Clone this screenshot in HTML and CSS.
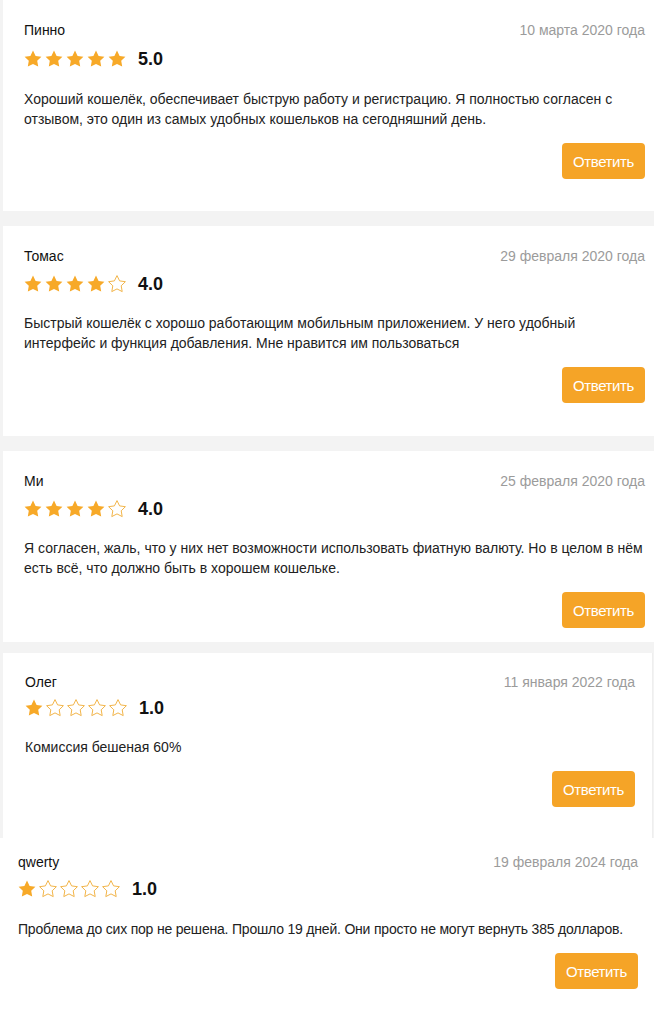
FILE: index.html
```html
<!DOCTYPE html>
<html>
<head>
    <meta charset="utf-8">
    <title>Отзывы</title>
    <link rel="stylesheet" href="styles.css">
</head>
<body>
    <svg width="0" height="0" class="defs">
        <defs>
            <path id="star" d="M9 0.6l2.6 5.3 5.8 0.8-4.2 4.1 1 5.8L9 13.9l-5.2 2.7 1-5.8L0.6 6.7l5.8-0.8z"/>
        </defs>
    </svg>

    <div class="review review-1">
        <div class="review-head">
            <span class="name">Пинно</span>
            <span class="date">10 марта 2020 года</span>
        </div>
        <div class="rating">
            <div class="stars" data-value="5"></div>
            <span class="score">5.0</span>
        </div>
        <p class="text">Хороший кошелёк, обеспечивает быструю работу и регистрацию. Я полностью согласен с отзывом, это один из самых удобных кошельков на сегодняшний день.</p>
        <div class="actions"><button>Ответить</button></div>
    </div>

    <div class="review review-2">
        <div class="review-head">
            <span class="name">Томас</span>
            <span class="date">29 февраля 2020 года</span>
        </div>
        <div class="rating">
            <div class="stars" data-value="4"></div>
            <span class="score">4.0</span>
        </div>
        <p class="text">Быстрый кошелёк с хорошо работающим мобильным приложением. У него удобный интерфейс и функция добавления. Мне нравится им пользоваться</p>
        <div class="actions"><button>Ответить</button></div>
    </div>

    <div class="review review-3">
        <div class="review-head">
            <span class="name">Ми</span>
            <span class="date">25 февраля 2020 года</span>
        </div>
        <div class="rating">
            <div class="stars" data-value="4"></div>
            <span class="score">4.0</span>
        </div>
        <p class="text">Я согласен, жаль, что у них нет возможности использовать фиатную валюту. Но в целом в нём есть всё, что должно быть в хорошем кошельке.</p>
        <div class="actions"><button>Ответить</button></div>
    </div>

    <div class="review review-4">
        <div class="review-head">
            <span class="name">Олег</span>
            <span class="date">11 января 2022 года</span>
        </div>
        <div class="rating">
            <div class="stars" data-value="1"></div>
            <span class="score">1.0</span>
        </div>
        <p class="text">Комиссия бешеная 60%</p>
        <div class="actions"><button>Ответить</button></div>
    </div>

    <div class="review review-5">
        <div class="review-head">
            <span class="name">qwerty</span>
            <span class="date">19 февраля 2024 года</span>
        </div>
        <div class="rating">
            <div class="stars" data-value="1"></div>
            <span class="score">1.0</span>
        </div>
        <p class="text">Проблема до сих пор не решена. Прошло 19 дней. Они просто не могут вернуть 385 долларов.</p>
        <div class="actions"><button>Ответить</button></div>
    </div>

<script>
// fill the star rows from data-value
document.querySelectorAll(".stars").forEach(row => {
    const value = Number(row.getAttribute("data-value"));
    let html = "";
    for (let i = 1; i <= 5; i++) {
        const cls = i <= value ? "star full" : "star empty";
        html += '<svg class="' + cls + '" viewBox="0 0 18 18"><use href="#star"/></svg>';
    }
    row.innerHTML = html;
});
</script>
</body>
</html>
```

FILE: styles.css
```css
body {
    margin: 0;
    background: #f3f3f3;
    font-family: "Liberation Sans", Arial, sans-serif;
    color: #1a1a1a;
}
.defs {
    position: absolute;
}
.review {
    background: #fff;
    margin-left: 3px;
    padding: 20px 9px 32px 21px;
}
.review-2 {
    margin-top: 15px;
    padding-bottom: 33px;
}
.review-3 {
    margin-top: 15px;
    padding-bottom: 14px;
}
.review-2 .rating,
.review-3 .rating {
    margin-top: 6px;
}
.review-2 .text,
.review-3 .text {
    margin-top: 17px;
}
.review-4 {
    margin-top: 11px;
    padding: 19px 17px 31px 22px;
    margin-right: 1px;
    border-right: 1px solid #eee;
}
.review-4 .rating {
    margin-top: 4px;
}
.review-4 .text {
    margin-top: 17px;
}
.review-5 {
    margin-left: 0;
    padding: 14px 16px 22px 18px;
}
.review-5 .rating {
    margin-top: 5px;
}
.review-5 .text {
    letter-spacing: -0.2px;
    white-space: nowrap;
}
.review-head {
    display: flex;
    justify-content: space-between;
    align-items: center;
    height: 20px;
    font-size: 14px;
}
.name {
    color: #111;
}
.date {
    color: #9b9b9b;
}
.rating {
    display: flex;
    align-items: center;
    height: 24px;
    margin-top: 7px;
}
.stars {
    display: flex;
    gap: 3px;
}
.star {
    width: 18px;
    height: 18px;
}
.star.full {
    fill: #f7a928;
}
.star.empty {
    fill: none;
    stroke: #f2b54a;
    stroke-width: 1;
}
.score {
    margin-left: 12px;
    font-size: 18px;
    font-weight: bold;
    color: #111;
}
.text {
    margin: 18px 0 0;
    font-size: 14px;
    line-height: 20px;
    color: #222;
}
.actions {
    display: flex;
    justify-content: flex-end;
    margin-top: 14px;
}
button {
    width: 83px;
    height: 36px;
    background: #f5a427;
    color: #fff;
    border: none;
    border-radius: 4px;
    font-family: "Liberation Sans", Arial, sans-serif;
    font-size: 15px;
    letter-spacing: -0.4px;
    padding: 0;
    cursor: pointer;
}
```
